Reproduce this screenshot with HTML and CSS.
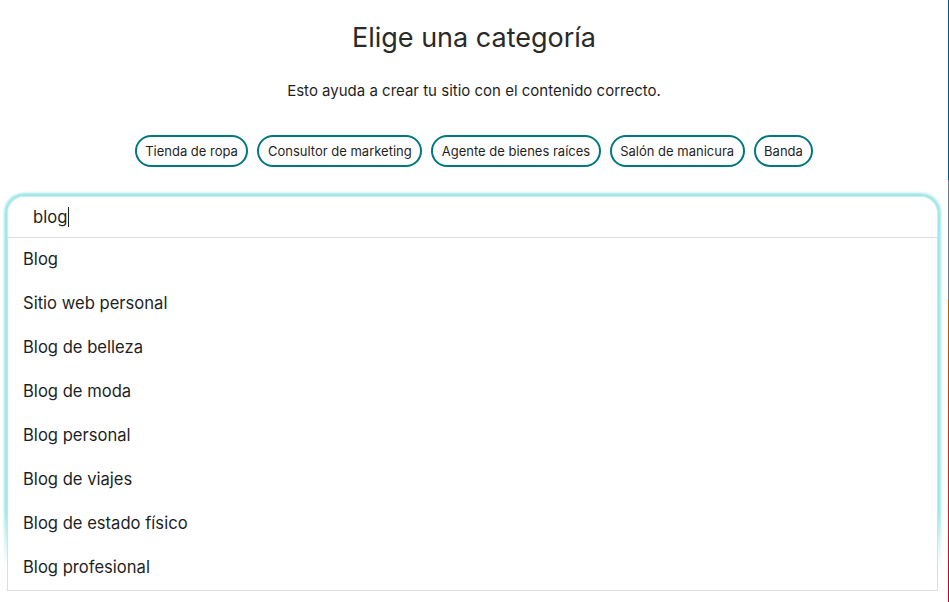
FILE: index.html
```html
<!DOCTYPE html>
<html lang="es">
<head>
  <meta charset="UTF-8" />
  <meta name="viewport" content="width=device-width, initial-scale=1.0"/>
  <title>Elige una categoría</title>
  <link rel="stylesheet" href="styles.css">
</head>
<body>
  <div class="page">
    <main class="content">
      <h1 class="title">Elige una categoría</h1>
      <p class="subtitle">Esto ayuda a crear tu sitio con el contenido correcto.</p>

      <div class="chips">
        <button class="chip">Tienda de ropa</button>
        <button class="chip">Consultor de marketing</button>
        <button class="chip">Agente de bienes raíces</button>
        <button class="chip">Salón de manicura</button>
        <button class="chip">Banda</button>
      </div>

      <div class="combo">
        <div class="combo-input">
          <span class="typed">blog</span><span class="caret"></span>
        </div>
        <ul class="options">
          <li>Blog</li>
          <li>Sitio web personal</li>
          <li>Blog de belleza</li>
          <li>Blog de moda</li>
          <li>Blog personal</li>
          <li>Blog de viajes</li>
          <li>Blog de estado físico</li>
          <li>Blog profesional</li>
        </ul>
      </div>
    </main>
    <div class="edge"></div>
  </div>
</body>
</html>
```

FILE: styles.css
```css
/* base */
* {
  margin: 0;
  padding: 0;
  box-sizing: border-box;
}
html, body {
  height: 100%;
  background: #fff;
  font-family: Inter, "Noto Sans", sans-serif;
  color: #1f1f1f;
  overflow: hidden;
}

.page {
  display: flex;
  height: 100%;
}
.content {
  flex: 1;
  display: flex;
  flex-direction: column;
  align-items: center;
  padding-top: 20px;
}
.edge {
  width: 1px;
  background: linear-gradient(to bottom,
    #00568c 0, #00568c 180px,
    #6e7890 180px, #6e7890 300px,
    #b26800 300px, #c2003e 100%);
}

/* heading */
.title {
  font-size: 27px;
  font-weight: 400;
  line-height: 36px;
  color: #2a2a2a;
}
.subtitle {
  margin-top: 25px;
  font-size: 15px;
  line-height: 20px;
  color: #1f1f1f;
}

/* suggestion chips */
.chips {
  display: flex;
  gap: 9px;
  margin-top: 34px;
}
.chip {
  height: 32px;
  padding: 0 8.5px;
  border: 2px solid #00787e;
  border-radius: 16px;
  background: #fff;
  color: #1f1f1f;
  font-family: inherit;
  font-size: 13px;
  cursor: pointer;
}

/* search combobox */
.combo {
  position: relative;
  z-index: 0;
  align-self: stretch;
  margin: 29px 10px 0 7px;
}
.combo::before {
  content: '';
  position: absolute;
  top: -3px;
  left: -3px;
  right: -3px;
  bottom: 24px;
  border-radius: 20px 20px 0 0;
  background: linear-gradient(to bottom, #9fe6e9 0, #9fe6e9 85%, rgba(159,230,233,0) 100%);
  filter: blur(1.2px);
  z-index: -1;
}
.combo-input {
  height: 42px;
  display: flex;
  align-items: center;
  padding-left: 25px;
  background: #fff;
  border: 1px solid #c9eef0;
  border-bottom: 1px solid #d8dce3;
  border-radius: 17px 17px 0 0;
  font-size: 16.6px;
}
.caret {
  width: 1px;
  height: 20px;
  margin-left: 1px;
  background: #1f1f1f;
}
.options {
  list-style: none;
  background: #fff;
  border: 1px solid #d8dee3;
  border-top: none;
}
.options li {
  height: 44px;
  display: flex;
  align-items: center;
  padding-left: 15px;
  padding-bottom: 2px;
  font-size: 16.6px;
  color: #1f1f1f;
}
```
